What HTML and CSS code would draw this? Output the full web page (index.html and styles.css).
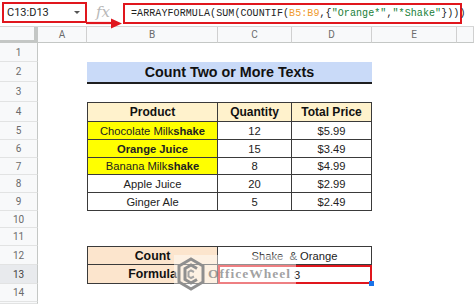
FILE: index.html
```html
<!DOCTYPE html>
<html>
<head>
<meta charset="utf-8">
<link rel="stylesheet" href="styles.css">
</head>
<body>
<div class="page">
  <div class="topbar">
    <div class="namebox"><span class="nb-text">C13:D13</span><span class="caret"></span></div>
    <div class="fx">fx</div>
    <div class="formula">=ARRAYFORMULA(SUM(COUNTIF(<span class="ref">B5:B9</span>,{<span class="str">"Orange*"</span>,<span class="str">"*Shake"</span>})))</div>
    <svg class="arrow" width="40" height="14" viewBox="0 0 40 14">
      <line x1="0" y1="7" x2="28" y2="7" stroke="#e0161d" stroke-width="2.2"/>
      <polygon points="25,2.5 36,7.5 25,12.5" fill="#e0161d"/>
    </svg>
  </div>

  <div class="sheet">
    <div class="row hdr">
      <div class="rh corner"></div>
      <div class="ch ca">A</div>
      <div class="ch cb">B</div>
      <div class="ch cc">C</div>
      <div class="ch cd">D</div>
      <div class="ch ce">E</div>
      <div class="ch cf"></div>
    </div>

    <div class="row h19"><div class="rh">1</div></div>
    <div class="row h20"><div class="rh">2</div><div class="ca"></div><div class="title">Count Two or More Texts</div></div>
    <div class="row h20"><div class="rh">3</div></div>
    <div class="row h20">
      <div class="rh">4</div><div class="ca"></div>
      <div class="cell cb head first top">Product</div>
      <div class="cell cc head top">Quantity</div>
      <div class="cell cd head top">Total Price</div>
    </div>
    <div class="row h18">
      <div class="rh">5</div><div class="ca"></div>
      <div class="cell cb yel first">Chocolate Milk<b>shake</b></div>
      <div class="cell cc">12</div>
      <div class="cell cd">$5.99</div>
    </div>
    <div class="row h18">
      <div class="rh">6</div><div class="ca"></div>
      <div class="cell cb yel first"><b>Orange Juice</b></div>
      <div class="cell cc">15</div>
      <div class="cell cd">$3.49</div>
    </div>
    <div class="row h17">
      <div class="rh">7</div><div class="ca"></div>
      <div class="cell cb yel first">Banana Milk<b>shake</b></div>
      <div class="cell cc">8</div>
      <div class="cell cd">$4.99</div>
    </div>
    <div class="row h18">
      <div class="rh">8</div><div class="ca"></div>
      <div class="cell cb first">Apple Juice</div>
      <div class="cell cc">20</div>
      <div class="cell cd">$2.99</div>
    </div>
    <div class="row h18">
      <div class="rh">9</div><div class="ca"></div>
      <div class="cell cb first">Ginger Ale</div>
      <div class="cell cc">5</div>
      <div class="cell cd">$2.49</div>
    </div>
    <div class="row h17"><div class="rh">10</div></div>
    <div class="row h18"><div class="rh">11</div></div>
    <div class="row h19">
      <div class="rh">12</div><div class="ca"></div>
      <div class="cell cb peach first top">Count</div>
      <div class="cell ccd top">Shake&nbsp; &amp; Orange</div>
    </div>
    <div class="row h19">
      <div class="rh sel">13</div><div class="ca"></div>
      <div class="cell cb peach first">Formula</div>
      <div class="cell ccd selbox"><span class="val">3</span><span class="handle"></span></div>
    </div>
    <div class="row h18"><div class="rh">14</div></div>
    <div class="row h2"><div class="rh"></div></div>
  </div>

  <div class="watermark">
    <svg width="28" height="34" viewBox="0 0 28 34">
      <polygon points="14,2 26,9 26,25 14,32 2,25 2,9" fill="none" stroke="#8f8f8f" stroke-width="3"/>
      <polyline points="20,11.5 14,8 8,11.5 8,22.5 14,26 20,22.5" fill="none" stroke="#8f8f8f" stroke-width="3"/>
      <polyline points="17,15 14,13.5 11.5,15 11.5,19.5 14,21 17,19.5" fill="none" stroke="#a5a5a5" stroke-width="2"/>
    </svg>
    <span class="wm-text">OfficeWheel</span>
  </div>
</div>
</body>
</html>
```

FILE: styles.css
```css
* { box-sizing: border-box; }
html, body { margin: 0; padding: 0; background: #fff; }
body { width: 474px; height: 304px; overflow: hidden; font-family: "Liberation Sans", Arial, sans-serif; color: #222; }

.page { position: relative; width: 474px; height: 304px; overflow: hidden; }

.topbar { position: relative; height: 27px; display: flex; align-items: flex-start; border-bottom: 1px solid #d6d6d6; }
.namebox { margin: 2px 0 0 2px; width: 85px; height: 21px; border: 2px solid #e0161d; display: flex; align-items: center; justify-content: space-between; padding: 0 4px 0 3px; }
.nb-text { font-family: Roboto, "Liberation Sans", sans-serif; font-size: 11px; color: #222; }
.caret { width: 0; height: 0; border-left: 3px solid transparent; border-right: 3px solid transparent; border-top: 3px solid #555; margin-right: 1px; }
.fx { width: 36px; height: 23px; display: flex; align-items: center; justify-content: center; font-family: "DejaVu Serif", "Liberation Serif", serif; font-style: italic; font-size: 15px; color: #b8b8b8; padding-right: 4px; }
.formula { margin-top: 3px; width: 339px; height: 21px; border: 2px solid #e0161d; display: flex; align-items: center; padding-left: 6px; font-family: "Liberation Mono", monospace; font-size: 10px; letter-spacing: 0.08px; color: #222; white-space: pre; }
.ref { color: #f09a2c; }
.str { color: #188038; }
.arrow { position: absolute; left: 86px; top: 16px; }

.sheet { display: flex; flex-direction: column; }
.row { display: flex; }
.hdr { height: 16px; }
.h2 { height: 2px; }
.h17 { height: 17px; }
.h18 { height: 18px; }
.h19 { height: 19px; }
.h20 { height: 20px; }

.rh { width: 38px; flex: none; background: #f8f9fa; border-right: 1px solid #c4c7c5; border-bottom: 1px solid #e2e3e3; display: flex; align-items: center; justify-content: center; font-family: Roboto, "Liberation Sans", sans-serif; font-size: 10px; color: #6b6b6b; }
.rh.corner { border-right: 4px solid #c4c7c5; border-bottom: 3px solid #c4c7c5; }
.rh.sel { background: #e8eaed; color: #444; }
.ch { background: #f8f9fa; border-right: 1px solid #d0d0d0; border-bottom: 1px solid #c4c7c5; display: flex; align-items: center; justify-content: center; font-family: Roboto, "Liberation Sans", sans-serif; font-size: 10px; color: #6b6b6b; }

.ca { width: 49px; flex: none; }
.cb { width: 131px; flex: none; }
.cc { width: 74px; flex: none; }
.cd { width: 80px; flex: none; }
.ce { width: 85px; flex: none; }
.cf { flex: 1; }
.ccd { width: 154px; flex: none; }

.title { width: 285px; flex: none; background: #c9daf8; box-shadow: 0 2px 0 #1e1e1e; display: flex; align-items: center; justify-content: center; font-weight: bold; font-size: 14.3px; color: #111; }

.cell { border-right: 1px solid #3a3a3a; border-bottom: 1px solid #3a3a3a; display: flex; align-items: center; justify-content: center; font-size: 11.2px; color: #222; white-space: pre; }
.cell.first { border-left: 1px solid #3a3a3a; }
.cell.top { border-top: 1px solid #3a3a3a; }
.cell.head { background: #fff2cc; font-weight: bold; font-size: 12px; color: #111; }
.cell.yel { background: #ffff00; }
.cell.peach { background: #fce5cd; font-weight: bold; font-size: 12.3px; color: #111; }
.cell.selbox { position: relative; border: 2px solid #e0161d; }
.val { padding-left: 4px; }
.handle { position: absolute; right: -4px; bottom: -4px; width: 5px; height: 5px; background: #1a73e8; }

.watermark { position: absolute; left: 174px; top: 255px; width: 122px; height: 38px; background: rgba(255,255,255,0.45); display: flex; align-items: center; gap: 3px; padding-left: 3px; }
.wm-text { font-family: "Liberation Serif", serif; font-weight: bold; font-size: 13.5px; letter-spacing: 1px; color: rgba(120,120,120,0.7); }
```
